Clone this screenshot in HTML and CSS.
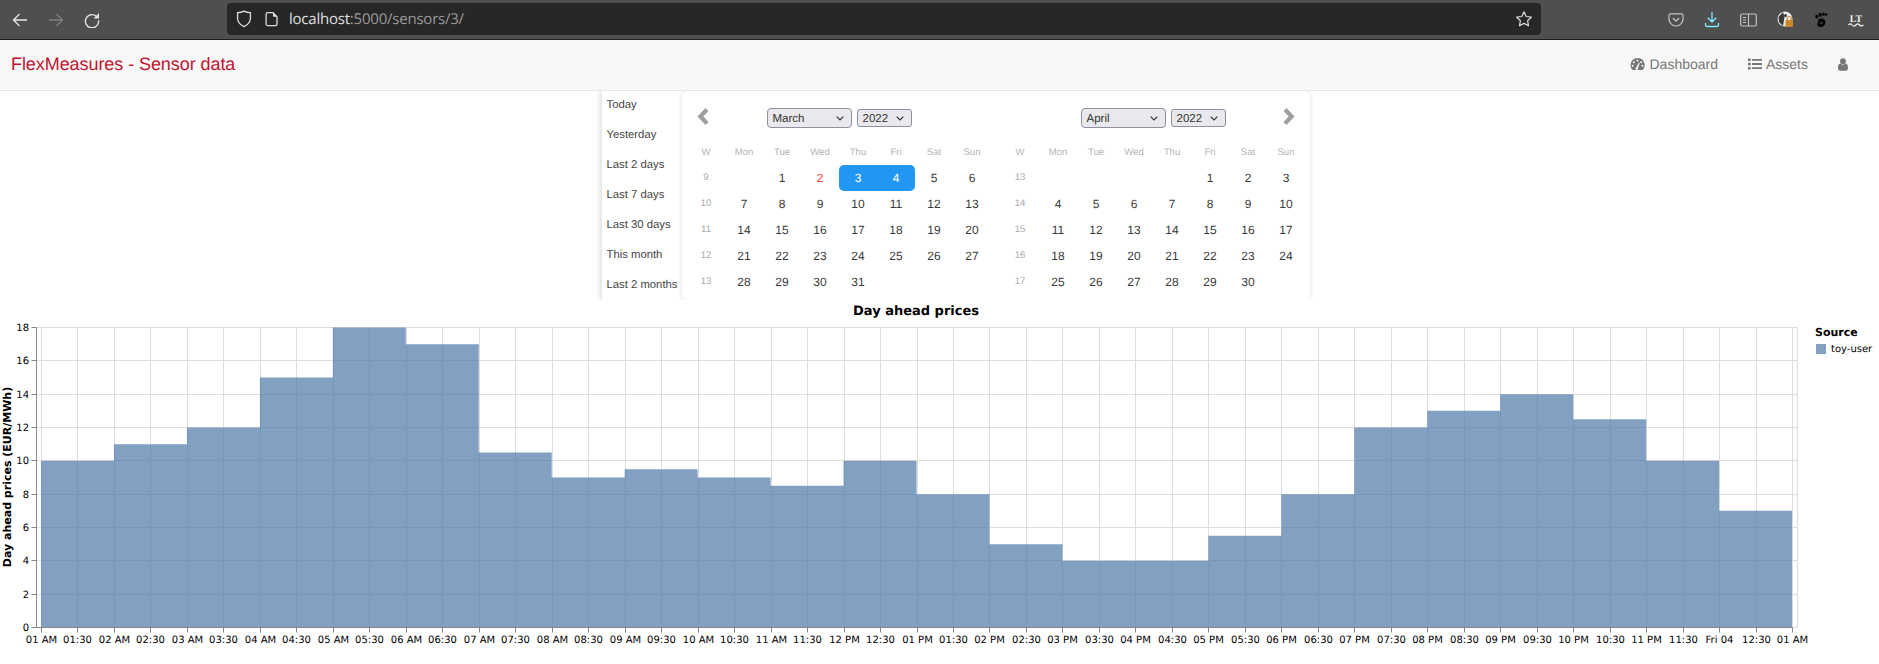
FILE: index.html
```html
<!DOCTYPE html>
<html lang="en">
<head>
<meta charset="utf-8">
<title>FlexMeasures - Sensor data</title>
<link rel="stylesheet" href="styles.css">
</head>
<body>
<div class="browser">
  <div class="nav-btns">
    <svg class="b-icon" width="16" height="16" viewBox="0 0 16 16"><path d="M15 8H1.5M7.5 2 1.5 8l6 6" fill="none" stroke="#e6e6e6" stroke-width="1.3"/></svg>
    <svg class="b-icon" width="16" height="16" viewBox="0 0 16 16"><path d="M1 8h13.5M8.5 2l6 6-6 6" fill="none" stroke="#808080" stroke-width="1.3"/></svg>
    <svg class="b-icon" width="16" height="16" viewBox="0 0 16 16"><path d="M13.3 5.2A6.6 6.6 0 1 0 14.6 8.4" fill="none" stroke="#e6e6e6" stroke-width="1.4"/><path d="M15 1v5.4H9.6z" fill="#e6e6e6"/></svg>
  </div>
  <div class="urlbar">
    <svg class="u-shield" width="16" height="18" viewBox="0 0 16 18"><path d="M8 1.2c2 1 4 1.5 6.4 1.5v5.6c0 3.8-2.8 6.6-6.4 8.4-3.6-1.8-6.4-4.6-6.4-8.4V2.7C4 2.7 6 2.200 8 1.200z" fill="none" stroke="#dcdcdc" stroke-width="1.3"/></svg>
    <svg class="u-doc" width="14" height="16" viewBox="0 0 14 16"><path d="M2.800 1.700h5.200l4 4v7.200a1.700 1.700 0 0 1-1.700 1.700H2.800a1.700 1.700 0 0 1-1.700-1.700V3.400a1.700 1.700 0 0 1 1.700-1.700z" fill="none" stroke="#dcdcdc" stroke-width="1.300"/><path d="M8 1.700v4h4" fill="#dcdcdc"/></svg>
    <span class="url"><span class="url-host">localhost</span>:5000/sensors/3/</span>
    <svg class="u-star" width="18" height="18" viewBox="0 0 18 18"><path d="M9 1.800l2.200 4.700 5.100.7-3.700 3.500.9 5.100L9 13.400l-4.500 2.400.9-5.100L1.700 7.200l5.100-.7z" fill="none" stroke="#dcdcdc" stroke-width="1.200" stroke-linejoin="round"/></svg>
  </div>
  <div class="tools">
    <svg width="16" height="16" viewBox="0 0 16 16"><path d="M2.500 1.800h11A1.500 1.500 0 0 1 15 3.300V7a7 7 0 0 1-14 0V3.300a1.500 1.500 0 0 1 1.500-1.500z" fill="none" stroke="#c4c4c4" stroke-width="1.200"/><path d="M4.800 6 8 9l3.200-3" fill="none" stroke="#c4c4c4" stroke-width="1.300"/></svg>
    <svg width="16" height="17" viewBox="0 0 16 17"><path d="M8 1v10M3.800 6.800 8 11l4.200-4.200M1.500 12v2a1.500 1.500 0 0 0 1.500 1.500h10a1.500 1.500 0 0 0 1.500-1.500v-2" fill="none" stroke="#80ebff" stroke-width="1.300"/></svg>
    <svg width="17" height="14" viewBox="0 0 17 14"><rect x=".7" y="1" width="15.600" height="12" rx="1.500" fill="none" stroke="#c4c4c4" stroke-width="1.200"/><path d="M8.500 1v12M3 4.500h3M3 7h3M3 9.500h3" stroke="#c4c4c4" stroke-width="1.100" fill="none"/></svg>
    <svg width="17" height="17" viewBox="0 0 17 17"><circle cx="8" cy="8" r="7.500" fill="#ececec"/><path d="M6 1l1.500 5L6 15 2 11 1.500 6z" fill="#3a3a3a"/><circle cx="8.500" cy="4.500" r="1.500" fill="#3a3a3a"/><rect x="8.500" y="9" width="7.500" height="7" rx="1" fill="#c98a2e"/><path d="M10.300 9V7.500a2 2 0 0 1 4 0V9" fill="none" stroke="#c98a2e" stroke-width="1.200"/></svg>
    <svg width="14" height="16" viewBox="0 0 14 16"><path d="M6.800 6.500c3-.5 5 1.500 4.500 4.500-.4 2.800-3.200 4.500-5.500 4-2.300-.5-3.200-2.700-2-4.300.7-1 1-1.400.6-2.300C4 7 5.300 6.700 6.800 6.500z" fill="#000"/><path d="M5 11l4-1.200-1.200 2.500z" fill="#4f4f4f"/><ellipse cx="2.800" cy="4.600" rx="1.500" ry="2" fill="#000"/><ellipse cx="6.200" cy="2.800" rx="1.500" ry="2" fill="#000"/><ellipse cx="9.600" cy="2.300" rx="1.300" ry="1.700" fill="#000"/><ellipse cx="12.300" cy="2.600" rx="1" ry="1.300" fill="#000"/></svg>
    <svg width="16" height="16" viewBox="0 0 16 16"><text class="lt-mark" x="8" y="10" text-anchor="middle">LT</text><path d="M.5 13c1.500-1.600 2.500-1.600 3.700 0s2.400 1.600 3.700 0 2.400-1.600 3.700 0 2.400 1.200 3.900 0" fill="none" stroke="#f2f2f2" stroke-width="1.200"/></svg>
  </div>
</div>

<nav class="navbar">
  <a class="brand">FlexMeasures - Sensor data</a>
  <ul class="menu">
    <li class="menu-dash">
      <svg width="15" height="14" viewBox="0 0 15 14"><path d="M7.500 1A7 7 0 0 0 .5 8c0 1.900.7 3.500 1.800 4.800.2.200.4.200.6.200h9.200c.2 0 .4 0 .6-.2A7 7 0 0 0 7.500 1z" fill="#777"/><g fill="#f8f8f8"><circle cx="7.500" cy="3.600" r="1"/><circle cx="3.900" cy="5.200" r="1"/><circle cx="11.100" cy="5.200" r="1"/><circle cx="2.600" cy="8.800" r="1"/><circle cx="12.400" cy="8.800" r="1"/><path d="M6.200 10.500l2.800-5 .8.400-1.800 5.300a1.300 1.300 0 1 1-1.800-.700z"/></g></svg>
      <span>Dashboard</span>
    </li>
    <li class="menu-assets">
      <svg width="14" height="14" viewBox="0 0 14 14"><g fill="#777"><rect x="0" y="1.500" width="2.800" height="2.600" rx=".6"/><rect x="0" y="5.700" width="2.800" height="2.600" rx=".6"/><rect x="0" y="9.900" width="2.800" height="2.600" rx=".6"/><rect x="4" y="2" width="10" height="1.800" rx=".3"/><rect x="4" y="6.100" width="10" height="1.800" rx=".3"/><rect x="4" y="10.300" width="10" height="1.800" rx=".3"/></g></svg>
      <span>Assets</span>
    </li>
    <li class="menu-user">
      <svg width="10" height="13" viewBox="0 0 10 13"><circle cx="5" cy="3.200" r="2.900" fill="#777"/><path d="M2.200 5.600c1.600 1.300 4 1.300 5.600 0 1.500.3 2.200 1.800 2.200 4.400 0 1.700-1 2.800-2.300 2.800H2.300C1 12.800 0 11.700 0 10c0-2.600.7-4.100 2.200-4.400z" fill="#777"/></svg>
    </li>
  </ul>
</nav>

<section class="picker">
  <ul class="ranges">
    <li>Today</li><li>Yesterday</li><li>Last 2 days</li><li>Last 7 days</li><li>Last 30 days</li><li>This month</li><li>Last 2 months</li>
  </ul>
  <div class="months">
    <div class="month">
      <div class="month-head">
        <svg class="arrow arrow-prev" width="12" height="17" viewBox="0 0 12 17"><path d="M8.500 0 11.500 3 6.300 8.500l5.200 5.500-3 3L.5 8.500z" fill="#9e9e9e"/></svg>
        <div class="selects">
          <span class="sel sel-month">March<svg width="8" height="5" viewBox="0 0 8 5"><path d="M.7.700 4 4 7.300.700" fill="none" stroke="#333" stroke-width="1.200"/></svg></span>
          <span class="sel sel-year">2022<svg width="8" height="5" viewBox="0 0 8 5"><path d="M.7.700 4 4 7.300.700" fill="none" stroke="#333" stroke-width="1.200"/></svg></span>
        </div>
        <span></span>
      </div>
      <div class="grid">
        <span class="dow">W</span><span class="dow">Mon</span><span class="dow">Tue</span><span class="dow">Wed</span><span class="dow">Thu</span><span class="dow">Fri</span><span class="dow">Sat</span><span class="dow">Sun</span>
        <span class="wk">9</span><span></span><span class="d">1</span><span class="d today">2</span><span class="d sel-start">3</span><span class="d sel-end">4</span><span class="d">5</span><span class="d">6</span>
        <span class="wk">10</span><span class="d">7</span><span class="d">8</span><span class="d">9</span><span class="d">10</span><span class="d">11</span><span class="d">12</span><span class="d">13</span>
        <span class="wk">11</span><span class="d">14</span><span class="d">15</span><span class="d">16</span><span class="d">17</span><span class="d">18</span><span class="d">19</span><span class="d">20</span>
        <span class="wk">12</span><span class="d">21</span><span class="d">22</span><span class="d">23</span><span class="d">24</span><span class="d">25</span><span class="d">26</span><span class="d">27</span>
        <span class="wk">13</span><span class="d">28</span><span class="d">29</span><span class="d">30</span><span class="d">31</span><span></span><span></span><span></span>
      </div>
    </div>
    <div class="month">
      <div class="month-head">
        <span></span>
        <div class="selects">
          <span class="sel sel-month">April<svg width="8" height="5" viewBox="0 0 8 5"><path d="M.7.700 4 4 7.300.700" fill="none" stroke="#333" stroke-width="1.200"/></svg></span>
          <span class="sel sel-year">2022<svg width="8" height="5" viewBox="0 0 8 5"><path d="M.7.700 4 4 7.300.700" fill="none" stroke="#333" stroke-width="1.200"/></svg></span>
        </div>
        <svg class="arrow arrow-next" width="12" height="17" viewBox="0 0 12 17"><path d="M3.500 0 .5 3l5.200 5.500L.5 14l3 3 8-8.500z" fill="#9e9e9e"/></svg>
      </div>
      <div class="grid">
        <span class="dow">W</span><span class="dow">Mon</span><span class="dow">Tue</span><span class="dow">Wed</span><span class="dow">Thu</span><span class="dow">Fri</span><span class="dow">Sat</span><span class="dow">Sun</span>
        <span class="wk">13</span><span></span><span></span><span></span><span></span><span class="d">1</span><span class="d">2</span><span class="d">3</span>
        <span class="wk">14</span><span class="d">4</span><span class="d">5</span><span class="d">6</span><span class="d">7</span><span class="d">8</span><span class="d">9</span><span class="d">10</span>
        <span class="wk">15</span><span class="d">11</span><span class="d">12</span><span class="d">13</span><span class="d">14</span><span class="d">15</span><span class="d">16</span><span class="d">17</span>
        <span class="wk">16</span><span class="d">18</span><span class="d">19</span><span class="d">20</span><span class="d">21</span><span class="d">22</span><span class="d">23</span><span class="d">24</span>
        <span class="wk">17</span><span class="d">25</span><span class="d">26</span><span class="d">27</span><span class="d">28</span><span class="d">29</span><span class="d">30</span><span></span>
      </div>
    </div>
  </div>
</section>

<svg class="chart" width="1879" height="364" viewBox="0 300 1879 364">
  <text class="c-title" x="916" y="315" text-anchor="middle">Day ahead prices</text>
  <path class="grid-line" d="M41.500 327.500V627.500M77.500 327.500V627.500M114.500 327.500V627.500M150.500 327.500V627.500M187.500 327.500V627.500M223.500 327.500V627.500M260.500 327.500V627.500M296.500 327.500V627.500M333.500 327.500V627.500M369.500 327.500V627.500M406.500 327.500V627.500M442.500 327.500V627.500M479.500 327.500V627.500M515.500 327.500V627.500M552.500 327.500V627.500M588.500 327.500V627.500M625.500 327.500V627.500M661.500 327.500V627.500M698.500 327.500V627.500M734.500 327.500V627.500M771.500 327.500V627.500M807.500 327.500V627.500M844.500 327.500V627.500M880.500 327.500V627.500M917.500 327.500V627.500M953.500 327.500V627.500M989.500 327.500V627.500M1026.500 327.500V627.500M1062.500 327.500V627.500M1099.500 327.500V627.500M1135.500 327.500V627.500M1172.500 327.500V627.500M1208.500 327.500V627.500M1245.500 327.500V627.500M1281.500 327.500V627.500M1318.500 327.500V627.500M1354.500 327.500V627.500M1391.500 327.500V627.500M1427.500 327.500V627.500M1464.500 327.500V627.500M1500.500 327.500V627.500M1537.500 327.500V627.500M1573.500 327.500V627.500M1610.500 327.500V627.500M1646.500 327.500V627.500M1683.500 327.500V627.500M1719.500 327.500V627.500M1756.500 327.500V627.500M1792.500 327.500V627.500M1797.500 327.500V627.500"/>
  <path class="grid-line" d="M36.500 327.500H1797.500M36.500 360.500H1797.500M36.500 394.500H1797.500M36.500 427.500H1797.500M36.500 460.500H1797.500M36.500 494.500H1797.500M36.500 527.500H1797.500M36.500 560.500H1797.500M36.500 594.500H1797.500M36.500 627.500H1797.500"/>
  <path class="area" d="M41 627.500V460.800H113.960V444.200H186.920V427.500H259.880V377.500H332.840V327.500H405.800V344.200H478.760V452.500H551.720V477.500H624.680V469.200H697.640V477.500H770.600V485.800H843.560V460.800H916.520V494.200H989.480V544.200H1062.440V560.800H1208.360V535.800H1281.320V494.200H1354.280V427.500H1427.240V410.800H1500.200V394.200H1573.160V419.200H1646.120V460.800H1719.080V510.800H1792.040V627.500Z"/>
  <path class="axis-line" d="M36.500 327.500V627.500H1792.500"/>
  <path class="axis-line" d="M31.500 327.500H36.500M31.500 360.500H36.500M31.500 394.500H36.500M31.500 427.500H36.500M31.500 460.500H36.500M31.500 494.500H36.500M31.500 527.500H36.500M31.500 560.500H36.500M31.500 594.500H36.500M31.500 627.500H36.500"/>
  <path class="axis-line" d="M41.500 627.500v5M77.500 627.500v5M114.500 627.500v5M150.500 627.500v5M187.500 627.500v5M223.500 627.500v5M260.500 627.500v5M296.500 627.500v5M333.500 627.500v5M369.500 627.500v5M406.500 627.500v5M442.500 627.500v5M479.500 627.500v5M515.500 627.500v5M552.500 627.500v5M588.500 627.500v5M625.500 627.500v5M661.500 627.500v5M698.500 627.500v5M734.500 627.500v5M771.500 627.500v5M807.500 627.500v5M844.500 627.500v5M880.500 627.500v5M917.500 627.500v5M953.500 627.500v5M989.500 627.500v5M1026.500 627.500v5M1062.500 627.500v5M1099.500 627.500v5M1135.500 627.500v5M1172.500 627.500v5M1208.500 627.500v5M1245.500 627.500v5M1281.500 627.500v5M1318.500 627.500v5M1354.500 627.500v5M1391.500 627.500v5M1427.500 627.500v5M1464.500 627.500v5M1500.500 627.500v5M1537.500 627.500v5M1573.500 627.500v5M1610.500 627.500v5M1646.500 627.500v5M1683.500 627.500v5M1719.500 627.500v5M1756.500 627.500v5M1792.500 627.500v5"/>
  <g class="y-labels" text-anchor="end">
    <text x="29" y="331">18</text><text x="29" y="364">16</text><text x="29" y="398">14</text><text x="29" y="431">12</text><text x="29" y="464">10</text><text x="29" y="498">8</text><text x="29" y="531">6</text><text x="29" y="564">4</text><text x="29" y="598">2</text><text x="29" y="631">0</text>
  </g>
  <g class="x-labels" text-anchor="middle">
    <text x="41.500" y="643">01 AM</text><text x="77.500" y="643">01:30</text><text x="114.500" y="643">02 AM</text><text x="150.500" y="643">02:30</text><text x="187.500" y="643">03 AM</text><text x="223.500" y="643">03:30</text><text x="260.500" y="643">04 AM</text><text x="296.500" y="643">04:30</text><text x="333.500" y="643">05 AM</text><text x="369.500" y="643">05:30</text><text x="406.500" y="643">06 AM</text><text x="442.500" y="643">06:30</text><text x="479.500" y="643">07 AM</text><text x="515.500" y="643">07:30</text><text x="552.500" y="643">08 AM</text><text x="588.500" y="643">08:30</text><text x="625.500" y="643">09 AM</text><text x="661.500" y="643">09:30</text><text x="698.500" y="643">10 AM</text><text x="734.500" y="643">10:30</text><text x="771.500" y="643">11 AM</text><text x="807.500" y="643">11:30</text><text x="844.500" y="643">12 PM</text><text x="880.500" y="643">12:30</text><text x="917.500" y="643">01 PM</text><text x="953.500" y="643">01:30</text><text x="989.500" y="643">02 PM</text><text x="1026.500" y="643">02:30</text><text x="1062.500" y="643">03 PM</text><text x="1099.500" y="643">03:30</text><text x="1135.500" y="643">04 PM</text><text x="1172.500" y="643">04:30</text><text x="1208.500" y="643">05 PM</text><text x="1245.500" y="643">05:30</text><text x="1281.500" y="643">06 PM</text><text x="1318.500" y="643">06:30</text><text x="1354.500" y="643">07 PM</text><text x="1391.500" y="643">07:30</text><text x="1427.500" y="643">08 PM</text><text x="1464.500" y="643">08:30</text><text x="1500.500" y="643">09 PM</text><text x="1537.500" y="643">09:30</text><text x="1573.500" y="643">10 PM</text><text x="1610.500" y="643">10:30</text><text x="1646.500" y="643">11 PM</text><text x="1683.500" y="643">11:30</text><text x="1719.500" y="643">Fri 04</text><text x="1756.500" y="643">12:30</text><text x="1792.500" y="643">01 AM</text>
  </g>
  <text class="y-title" transform="translate(11 477) rotate(-90)" text-anchor="middle">Day ahead prices (EUR/MWh)</text>
  <text class="legend-title" x="1815" y="336">Source</text>
  <rect class="legend-swatch" x="1816" y="344" width="10" height="10"/>
  <text class="legend-label" x="1831" y="352">toy-user</text>
</svg>
</body>
</html>
```

FILE: styles.css
```css
* { box-sizing: border-box; }
html, body { margin: 0; padding: 0; overflow: hidden; background: #fff; }
body { width: 1879px; height: 664px; font-family: "Liberation Sans", Arial, sans-serif; color: #333; text-rendering: geometricPrecision; }
ul { list-style: none; margin: 0; padding: 0; }

.browser { height: 40px; background: #4f4f4f; border-bottom: 1px solid #1f1f1f; display: flex; align-items: center; }
.nav-btns { display: flex; align-items: center; gap: 20px; width: 227px; padding: 1px 0 0 12px; flex: none; }
.urlbar { width: 1314px; height: 32px; margin-top: -1px; background: #272727; border-radius: 4px; display: flex; align-items: center; padding: 0 8px 0 9px; flex: none; }
.u-shield { flex: none; }
.u-doc { flex: none; margin-left: 13px; }
.url { margin-left: 10px; font: 15px "Open Sans", sans-serif; letter-spacing: -.22px; color: #9a9a9a; flex: 1; white-space: nowrap; }
.url-host { color: #e0e0e0; }
.u-star { flex: none; }
.tools { display: flex; align-items: center; gap: 20px; margin-left: 127px; }
.lt-mark { font: bold 10px "Liberation Serif", serif; fill: #f2f2f2; }

.navbar { height: 51px; background: #f8f8f8; border-bottom: 1px solid #e7e7e7; display: flex; align-items: center; justify-content: space-between; padding: 0 0 2px 11px; }
.brand { font-size: 18px; letter-spacing: -.07px; color: #c21431; }
.menu { display: flex; align-items: center; font-size: 14px; color: #777; }
.menu li { display: flex; align-items: center; gap: 4px; }
.menu-dash { margin-right: 30px; }
.menu-assets { margin-right: 30px; }
.menu-user { margin-right: 31px; }

.picker { height: 209px; margin-left: 602px; width: 708px; display: flex; clip-path: inset(0 -12px); }
.ranges { width: 80px; height: 209px; overflow: hidden; padding: 0 0 0 4.500px; box-shadow: -2px 0 5px rgba(0,0,0,.14); font-size: 11.300px; color: #444; background: #fff; }
.ranges li { height: 30px; line-height: 29px; white-space: nowrap; }
.months { width: 628px; height: 209px; padding: 17px 5px 5px; display: flex; gap: 10px; border-radius: 5px; box-shadow: 0 0 5px rgba(0,0,0,.14); background: #fff; }
.month { width: 304px; }
.month-head { height: 20px; display: grid; grid-template-columns: 1fr auto 1fr; align-items: center; }
.arrow { display: block; }
.arrow-prev { margin-left: 10px; margin-top: -4px; }
.arrow-next { justify-self: end; margin-right: 10px; margin-top: -4px; }
.selects { display: flex; align-items: center; gap: 5px; }
.sel { display: flex; align-items: center; justify-content: space-between; background: #e9e9ed; border: 1px solid #8f8f9d; font-size: 11.500px; line-height: 18px; color: #333; padding: 1px 7px 0 5px; }
.sel-month { width: 85px; height: 20px; border-radius: 4px; }
.sel-year { width: 55px; height: 18px; border-radius: 3px; }

.grid { display: grid; grid-template-columns: repeat(8, 38px); grid-template-rows: 25px repeat(5, 26px); margin-top: 12px; text-align: center; }
.grid span { display: flex; align-items: center; justify-content: center; }
.dow { font-size: 9.600px; color: #b5b5b5; }
.grid .wk { font-size: 9.600px; color: #aaa; padding-bottom: 1px; }
.d { font-size: 12px; color: #3a3a3a; }
.today { color: #f44336; }
.sel-start, .sel-end { background: #2196f3; color: #fff; }
.sel-start { border-radius: 5px 0 0 5px; }
.sel-end { border-radius: 0 5px 5px 0; }

.chart { display: block; font-family: "DejaVu Sans", sans-serif; }
.c-title { font-size: 13px; font-weight: bold; fill: #000; }
.grid-line { fill: none; stroke: #ddd; stroke-width: 1; }
.area { fill: #4c78a8; fill-opacity: .7; }
.axis-line { fill: none; stroke: #888; stroke-width: 1; }
.y-labels, .x-labels { font-size: 10px; fill: #000; }
.y-title { font-size: 11px; font-weight: bold; fill: #000; }
.legend-title { font-size: 11px; font-weight: bold; fill: #000; }
.legend-swatch { fill: #4c78a8; fill-opacity: .7; }
.legend-label { font-size: 10px; fill: #000; }
```
